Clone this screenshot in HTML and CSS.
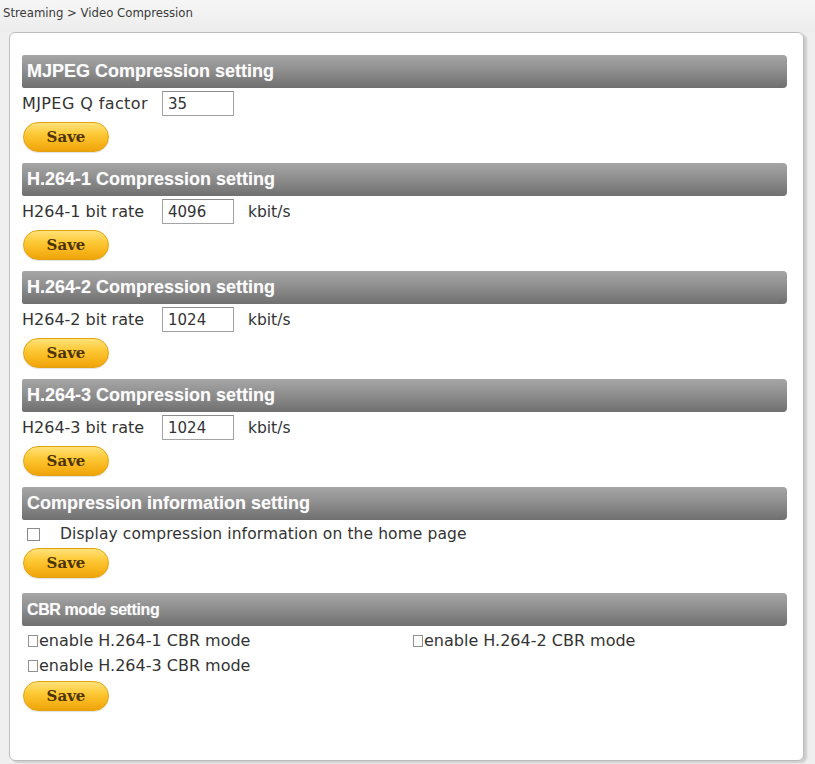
FILE: index.html
```
<!DOCTYPE html>
<html>
<head>
<meta charset="utf-8">
<title>Video Compression</title>
<link rel="stylesheet" href="styles.css">
</head>
<body>
<div class="crumb">Streaming &gt; Video Compression</div>
<div class="panel">
  <section class="sec">
    <div class="bar">MJPEG Compression setting</div>
    <div class="row"><span class="label label-wide">MJPEG Q factor</span><input class="field" type="text" value="35"></div>
    <button class="save">Save</button>
  </section>
  <section class="sec">
    <div class="bar">H.264-1 Compression setting</div>
    <div class="row"><span class="label">H264-1 bit rate</span><input class="field" type="text" value="4096"><span class="unit">kbit/s</span></div>
    <button class="save">Save</button>
  </section>
  <section class="sec">
    <div class="bar">H.264-2 Compression setting</div>
    <div class="row"><span class="label">H264-2 bit rate</span><input class="field" type="text" value="1024"><span class="unit">kbit/s</span></div>
    <button class="save">Save</button>
  </section>
  <section class="sec">
    <div class="bar">H.264-3 Compression setting</div>
    <div class="row"><span class="label">H264-3 bit rate</span><input class="field" type="text" value="1024"><span class="unit">kbit/s</span></div>
    <button class="save">Save</button>
  </section>
  <section class="sec sec-info">
    <div class="bar">Compression information setting</div>
    <label class="row-check"><input class="chk" type="checkbox"><span class="check-text">Display compression information on the home page</span></label>
    <button class="save save-tight">Save</button>
  </section>
  <section class="sec">
    <div class="bar bar-narrow">CBR mode setting</div>
    <div class="cbr-grid">
      <label class="cbr-item"><input class="chk chk-small" type="checkbox"><span>enable H.264-1 CBR mode</span></label>
      <label class="cbr-item"><input class="chk chk-small" type="checkbox"><span>enable H.264-2 CBR mode</span></label>
      <label class="cbr-item"><input class="chk chk-small" type="checkbox"><span>enable H.264-3 CBR mode</span></label>
    </div>
    <button class="save save-cbr">Save</button>
  </section>
</div>
</body>
</html>
```
FILE: styles.css
```
html, body {
  margin: 0;
  padding: 0;
}
body {
  background: #efefef;
  font-family: "DejaVu Sans", Verdana, sans-serif;
  color: #333;
  width: 815px;
  height: 764px;
  overflow: hidden;
}
.crumb {
  height: 32px;
  line-height: 26px;
  padding-left: 3px;
  font-family: "DejaVu Sans Condensed", "DejaVu Sans", sans-serif;
  font-size: 13px;
  color: #3a3a3a;
  background: linear-gradient(#f6f6f6, #ececec);
}
.panel {
  box-sizing: border-box;
  margin-left: 9px;
  width: 795px;
  height: 729px;
  background: #fff;
  border: 1px solid #bcbcbc;
  border-radius: 6px;
  box-shadow: 3px 2px 2px #cdcdcd;
  padding: 22px 16px 0 12px;
}
.sec {
  display: flex;
  flex-direction: column;
  align-items: flex-start;
  margin-bottom: 11px;
}
.bar {
  align-self: stretch;
  height: 33px;
  line-height: 33px;
  padding-left: 5px;
  border-radius: 2px 4px 4px 2px;
  background: linear-gradient(#a6a6a6 0%, #8f8f8f 45%, #7b7b7b 80%, #707070 100%);
  color: #fbfbfb;
  font-family: "Liberation Sans", Arial, sans-serif;
  font-weight: bold;
  font-size: 18px;
  text-shadow: 0 0 1px rgba(255,255,255,0.4);
}
.bar-narrow {
  font-size: 16px;
  letter-spacing: -0.4px;
}
.row {
  display: flex;
  align-items: center;
  height: 25px;
  margin-top: 3px;
  font-size: 15.5px;
}
.label {
  width: 140px;
  font-size: 16px;
}
.label-wide {
  letter-spacing: 0.4px;
}
.field {
  box-sizing: border-box;
  width: 72px;
  height: 25px;
  margin: 0;
  padding: 0 0 0 5px;
  border: 1px solid #a3a3a3;
  border-top-color: #8c8c8c;
  font-family: "DejaVu Sans", Verdana, sans-serif;
  font-size: 15px;
  color: #333;
  background: #fff;
}
.unit {
  margin-left: 14px;
}
.save {
  box-sizing: border-box;
  width: 86px;
  height: 30px;
  margin: 6px 0 0 1px;
  padding: 0;
  border: 1px solid #e3a30e;
  border-radius: 15px;
  background: linear-gradient(#ffe27a 0%, #fdc936 40%, #f7b31a 75%, #eea40c 100%);
  box-shadow: 0 1px 1px rgba(0,0,0,0.12);
  font-family: "DejaVu Serif", Georgia, serif;
  font-weight: bold;
  font-size: 15px;
  color: #4d3300;
}
.sec-info {
  margin-bottom: 15px;
}
.row-check {
  display: flex;
  align-items: center;
  height: 28px;
  font-size: 15.5px;
}
.chk {
  appearance: none;
  -webkit-appearance: none;
  box-sizing: border-box;
  width: 13px;
  height: 13px;
  margin: 0 20px 0 5px;
  border: 1px solid #8a8a8a;
  background: #fff;
}
.check-text {
  letter-spacing: 0.1px;
}
.save-tight {
  margin-top: 0;
}
.cbr-grid {
  display: grid;
  grid-template-columns: 385px 1fr;
  grid-auto-rows: 25px;
  margin-top: 2px;
  align-self: stretch;
}
.cbr-item {
  display: flex;
  align-items: center;
  font-size: 16px;
  margin-left: 5px;
}
.chk-small {
  width: 10px;
  height: 12px;
  margin: 0 1px 0 1px;
  border-color: #909090;
}
.save-cbr {
  margin-top: 3px;
}
```
